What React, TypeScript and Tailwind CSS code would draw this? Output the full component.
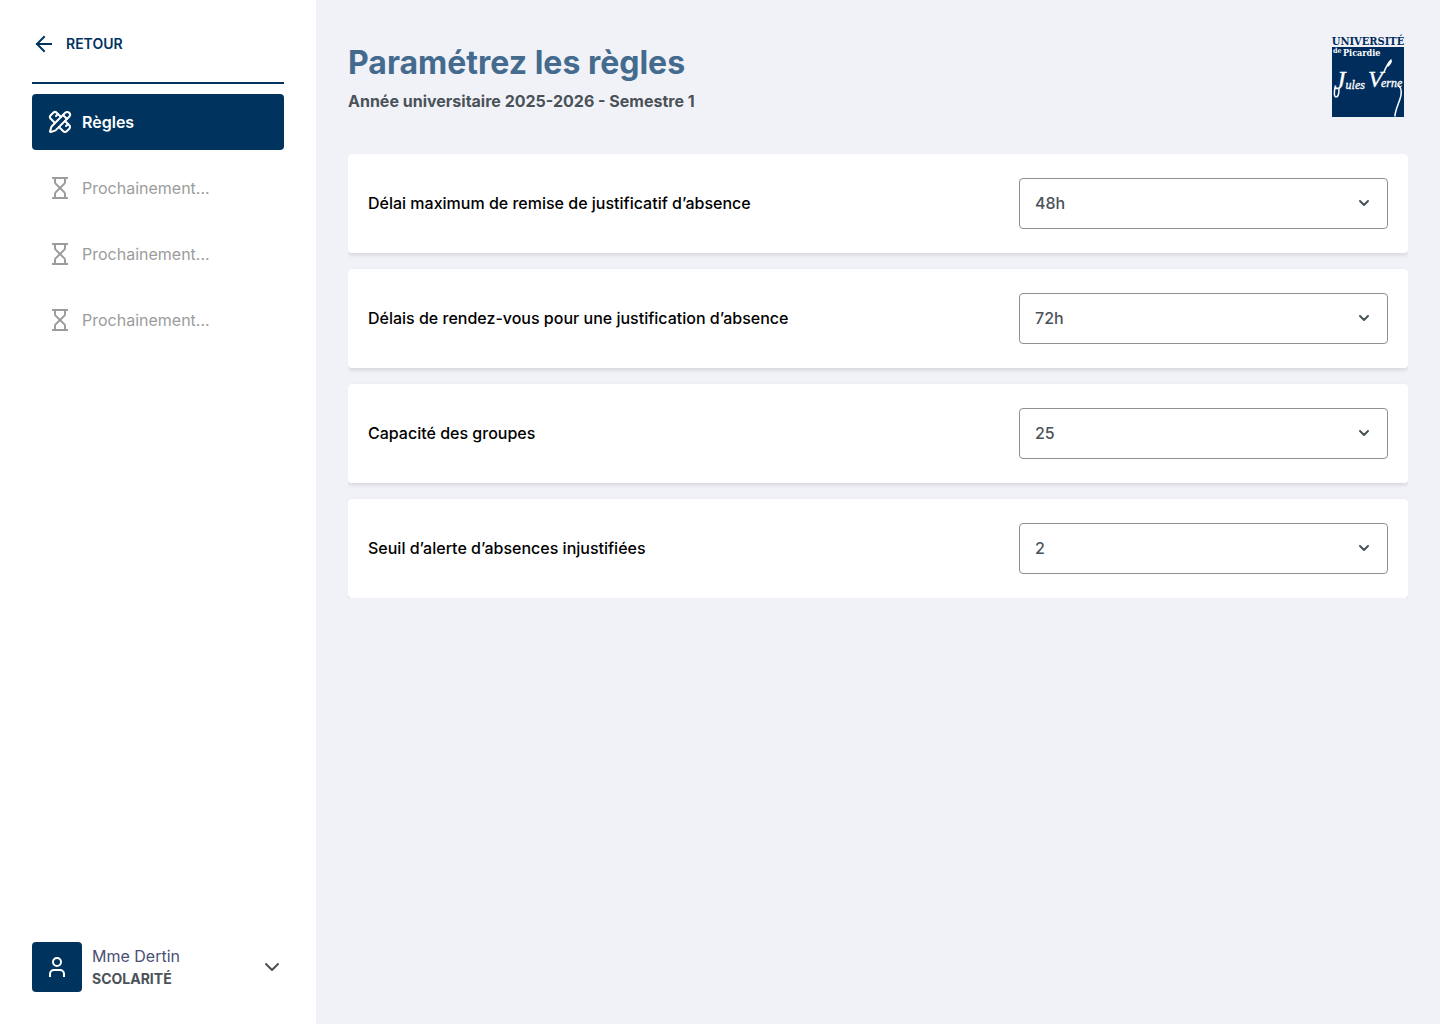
import { useId, useState } from "react";
import { ArrowLeft, ChevronDown, Hourglass, PencilRuler, User } from "lucide-react";

interface Rule {
    label: string;
    value: string;
    options: string[];
}

const rules: Rule[] = [
    { label: "Délai maximum de remise de justificatif d’absence", value: "48h", options: ["24h", "48h", "72h"] },
    { label: "Délais de rendez-vous pour une justification d’absence", value: "72h", options: ["24h", "48h", "72h"] },
    { label: "Capacité des groupes", value: "25", options: ["20", "25", "30"] },
    { label: "Seuil d’alerte d’absences injustifiées", value: "2", options: ["1", "2", "3"] },
];

const upcoming = [1, 2, 3];

const slab = "'DejaVu Serif Condensed', 'DejaVu Serif', serif";
const script = "'Liberation Serif', serif";

function UniversityLogo() {
    return (
        <svg width="80" height="84" viewBox="0 0 80 84" role="img" aria-label="Université de Picardie Jules Verne" className="shrink-0">
            <rect x="4" y="13" width="72" height="70" fill="#002d5c" />
            <text x="40" y="11" textAnchor="middle" fontFamily={slab} fontWeight="700" fontSize="11" fill="#002d5c">
                UNIVERSITÉ
            </text>
            <text x="5" y="19" fontFamily={slab} fontWeight="700" fontSize="7" fill="#fff">
                de
            </text>
            <text x="15" y="22" fontFamily={slab} fontWeight="700" fontSize="9" fill="#fff">
                Picardie
            </text>
            <g fontFamily={script} fontStyle="italic" fontSize="12" fill="#fff" stroke="#fff" strokeWidth="0.3">
                <text x="6" y="55">
                    <tspan fontSize="26">J</tspan>ules
                </text>
                <text x="40" y="53">
                    <tspan fontSize="24">V</tspan>
                    <tspan x="53">erne</tspan>
                </text>
            </g>
            {/* Signature flourishes */}
            <g fill="none" stroke="#fff" strokeWidth="1.5" strokeLinecap="round" strokeLinejoin="round">
                <path d="M7 54c-1 4-1 9 1 9s3-4 3-8" />
                <path d="M56 38c2-5 4-9 7-12 1 2-1 4-3 6" />
                <path d="M71 52c3 3 3 7 1 13-2 6-5 12-5 17" />
            </g>
        </svg>
    );
}

function Sidebar() {
    return (
        <aside className="flex w-[316px] shrink-0 flex-col bg-white p-8">
            <a href="#" className="flex items-center gap-2.5 text-sm font-semibold text-[#00345f]">
                <ArrowLeft size={24} strokeLinecap="square" strokeLinejoin="miter" />
                RETOUR
            </a>

            <nav className="mt-[26px] flex flex-col gap-2.5 border-t-2 border-[#00345f] pt-2.5">
                <a
                    href="#"
                    aria-current="page"
                    className="flex h-14 items-center gap-2.5 rounded bg-[#00345f] px-4 font-semibold text-white"
                >
                    <PencilRuler size={24} />
                    Règles
                </a>
                {upcoming.map((item) => (
                    <button
                        key={item}
                        type="button"
                        disabled
                        className="flex h-14 items-center gap-2.5 px-4 text-[#9c9c9c]"
                    >
                        <Hourglass size={24} strokeLinecap="square" strokeLinejoin="miter" />
                        Prochainement...
                    </button>
                ))}
            </nav>

            <button type="button" className="mt-auto flex items-center gap-2.5 text-left">
                <span className="flex size-[50px] items-center justify-center rounded bg-[#00345f] text-white">
                    <User size={24} strokeLinecap="square" />
                </span>
                <span className="flex flex-1 flex-col">
                    <span className="leading-6 text-[#4b4f73]">Mme Dertin</span>
                    <span className="text-sm leading-[22px] font-bold text-[#4a5258]">SCOLARITÉ</span>
                </span>
                <ChevronDown size={24} className="text-[#4a5258]" />
            </button>
        </aside>
    );
}

function RuleCard({ label, value, options }: Rule) {
    const id = useId();
    const [selected, setSelected] = useState(value);

    return (
        <div className="flex items-center justify-between gap-4 rounded bg-white px-5 py-6 shadow-[0_2px_4px_rgba(0,0,0,0.12)]">
            <label htmlFor={id} className="pb-0.5 font-medium text-black">
                {label}
            </label>
            <div className="relative w-[369px] shrink-0">
                <select
                    id={id}
                    value={selected}
                    onChange={(e) => setSelected(e.target.value)}
                    className="h-[51px] w-full appearance-none rounded border border-[#8f8f93] bg-white px-[15px] pb-0.5 font-medium text-[#4a5258]"
                >
                    {options.map((option) => (
                        <option key={option}>{option}</option>
                    ))}
                </select>
                {/* Arrow over the native select */}
                <ChevronDown
                    size={16}
                    strokeWidth={3}
                    className="pointer-events-none absolute top-[17px] right-4 text-[#4a5258]"
                />
            </div>
        </div>
    );
}

export default function App() {
    return (
        <div className="flex min-h-screen bg-[#f1f2f8] font-['Inter',sans-serif] text-base">
            <Sidebar />
            <main className="flex-1 px-8 pt-[34px] pb-8">
                <header className="flex items-start justify-between">
                    <div className="pt-[9px]">
                        <h1 className="text-[32px] leading-10 font-bold text-[#446b8e]">Paramétrez les règles</h1>
                        <p className="mt-1.5 leading-6 font-bold text-[#4a5258]">Année universitaire 2025-2026 - Semestre 1</p>
                    </div>
                    <UniversityLogo />
                </header>
                <section className="mt-9 flex flex-col gap-4 overflow-hidden">
                    {rules.map((rule) => (
                        <RuleCard key={rule.label} {...rule} />
                    ))}
                </section>
            </main>
        </div>
    );
}
